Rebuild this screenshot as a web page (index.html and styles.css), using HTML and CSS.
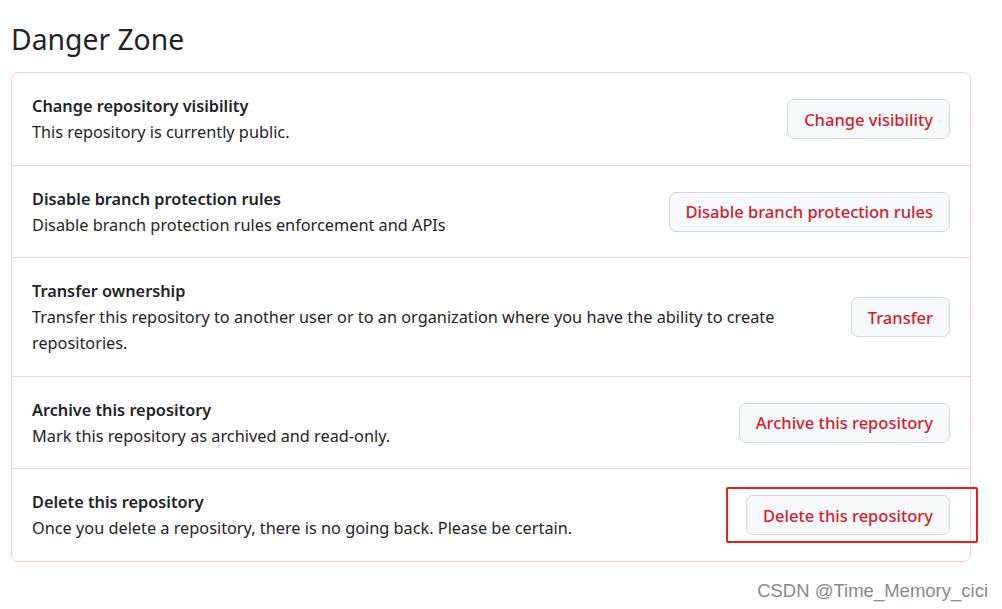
FILE: index.html
```html
<!DOCTYPE html>
<html>
<head>
<meta charset="utf-8">
<link rel="stylesheet" href="styles.css">
</head>
<body>
<div class="page">
  <h2 class="heading">Danger Zone</h2>
  <div class="box">
    <div class="row">
      <div class="info">
        <div class="title">Change repository visibility</div>
        <div class="desc">This repository is currently public.</div>
      </div>
      <button class="btn">Change visibility</button>
    </div>
    <div class="row">
      <div class="info">
        <div class="title">Disable branch protection rules</div>
        <div class="desc">Disable branch protection rules enforcement and APIs</div>
      </div>
      <button class="btn">Disable branch protection rules</button>
    </div>
    <div class="row">
      <div class="info">
        <div class="title">Transfer ownership</div>
        <div class="desc">Transfer this repository to another user or to an organization where you have the ability to create repositories.</div>
      </div>
      <button class="btn">Transfer</button>
    </div>
    <div class="row">
      <div class="info">
        <div class="title">Archive this repository</div>
        <div class="desc">Mark this repository as archived and read-only.</div>
      </div>
      <button class="btn">Archive this repository</button>
    </div>
    <div class="row">
      <div class="info">
        <div class="title">Delete this repository</div>
        <div class="desc">Once you delete a repository, there is no going back. Please be certain.</div>
      </div>
      <div class="highlight">
        <button class="btn">Delete this repository</button>
      </div>
    </div>
  </div>
  <div class="watermark">CSDN @Time_Memory_cici</div>
</div>
</body>
</html>
```
FILE: styles.css
```css
html, body {
  margin: 0;
  padding: 0;
  background: #ffffff;
}
.page {
  width: 960px;
  margin-left: 11px;
  padding-top: 22px;
  font-family: "Noto Sans", "Open Sans", sans-serif;
  color: #1f2328;
}
.heading {
  margin: 0 0 15px 0;
  font-size: 28.3px;
  line-height: 35px;
  font-weight: 400;
}
.box {
  border: 1px solid #ffcecb;
  border-radius: 7px;
}
.row {
  display: flex;
  align-items: center;
  justify-content: space-between;
  padding: 20px 20px 19.5px 20px;
  border-top: 1px solid #d8dee4;
}
.row:first-child {
  border-top: none;
}
.info {
  flex: 1;
  padding-right: 70px;
}
.title {
  font-size: 16.3px;
  font-weight: 600;
  line-height: 26px;
}
.desc {
  font-size: 16.3px;
  line-height: 26px;
}
.btn {
  font-family: inherit;
  font-size: 16.5px;
  font-weight: 500;
  color: #cf222e;
  background: #f6f8fa;
  border: 1px solid #d5d9de;
  border-radius: 7px;
  height: 40px;
  padding: 0 16px;
  white-space: nowrap;
}
.highlight {
  position: relative;
  display: flex;
}
.highlight::after {
  content: "";
  position: absolute;
  left: -20px;
  top: -8px;
  right: -28px;
  bottom: -8px;
  border: 2.5px solid #ee1c1c;
  border-radius: 2px;
}
.watermark {
  text-align: right;
  margin-right: -17px;
  margin-top: 18px;
  font-family: "Liberation Sans", Arial, sans-serif;
  font-size: 18.5px;
  color: #8a8a8a;
}
```
